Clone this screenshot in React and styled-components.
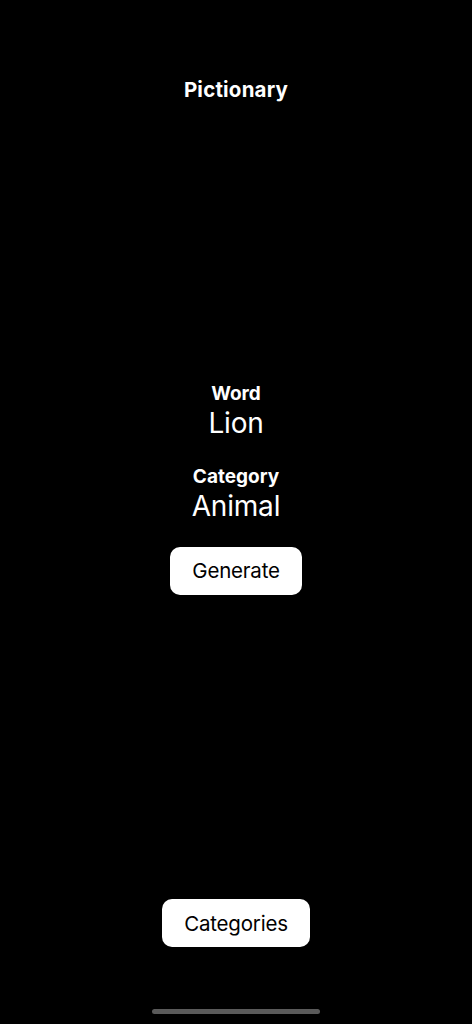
import React from "react";
import styled, { createGlobalStyle } from "styled-components";

const Global = createGlobalStyle`
  html, body { margin: 0; padding: 0; background: #000; }
  body { font-family: Inter, "Noto Sans", "Liberation Sans", sans-serif; -webkit-font-smoothing: antialiased; }
  #root { height: 100vh; }
`;

const Screen = styled.div`
  height: 1024px;
  display: flex;
  flex-direction: column;
  align-items: center;
  background: #000;
  color: #fff;
`;

const NavBar = styled.header`
  padding-top: 78px;
  height: 24px;
  box-sizing: content-box;
  display: flex;
  justify-content: center;
`;

const Title = styled.h1`
  margin: 0;
  font-size: 20.5px;
  line-height: 24px;
  font-weight: 700;
  letter-spacing: 0.2px;
`;

const Main = styled.main`
  flex: 1;
  display: flex;
  flex-direction: column;
  align-items: center;
  justify-content: center;
  padding-bottom: 25px;
`;

const Field = styled.div`
  display: flex;
  flex-direction: column;
  align-items: center;
  margin-top: ${(p) => p.$gap || 0}px;
`;

const Label = styled.div`
  font-size: 19px;
  line-height: 23px;
  font-weight: 700;
  letter-spacing: 0;
`;

const Value = styled.div`
  font-size: 28px;
  line-height: 34px;
  font-weight: 400;
  letter-spacing: -0.2px;
  margin-top: 1px;
`;

const Pill = styled.button`
  height: 48px;
  padding: 0 22px;
  border: none;
  border-radius: 10px;
  background: #fff;
  color: #000;
  font-family: inherit;
  font-size: 20.5px;
  font-weight: 400;
  letter-spacing: -0.2px;
  margin-top: ${(p) => p.$mt || 0}px;
  cursor: pointer;
`;

const Footer = styled.footer`
  display: flex;
  flex-direction: column;
  align-items: center;
  padding-bottom: 10px;
`;

const HomeIndicator = styled.div`
  width: 168px;
  height: 5px;
  border-radius: 3px;
  background: #5a5a5a;
  margin-top: 62px;
`;

export default function App() {
  return (
    <>
      <Global />
      <Screen>
        <NavBar>
          <Title>Pictionary</Title>
        </NavBar>
        <Main>
          <Field>
            <Label>Word</Label>
            <Value>Lion</Value>
          </Field>
          <Field $gap={25}>
            <Label>Category</Label>
            <Value>Animal</Value>
          </Field>
          <Pill $mt={24}>Generate</Pill>
        </Main>
        <Footer>
          <Pill>Categories</Pill>
          <HomeIndicator />
        </Footer>
      </Screen>
    </>
  );
}
